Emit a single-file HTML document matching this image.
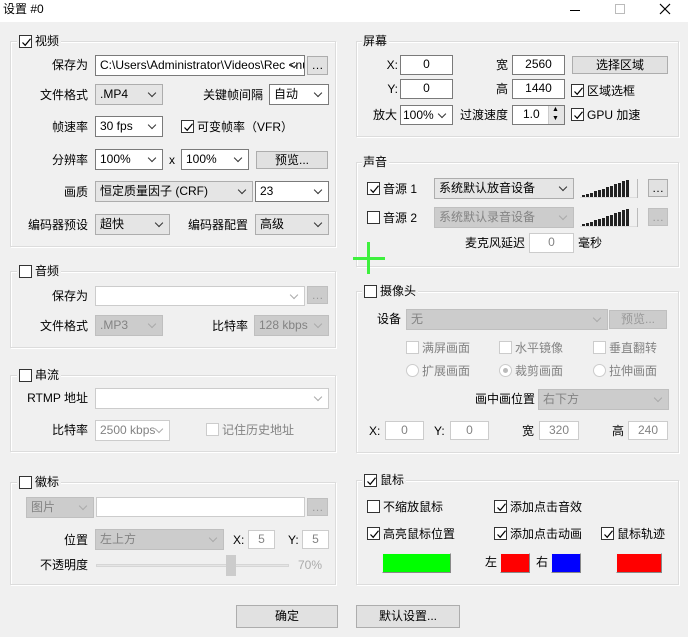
<!DOCTYPE html>
<html><head><meta charset="utf-8"><style>
*{margin:0;padding:0;box-sizing:border-box}
body{width:688px;height:637px;background:#f0f0f0;position:relative;overflow:hidden;font:12px "Liberation Sans","Noto Sans CJK SC",sans-serif;color:#000}
div,span{position:absolute}
.t{white-space:nowrap;line-height:14px}
.r{text-align:right}
.g{border:1px solid #dcdcdc;box-shadow:inset 1px 1px 0 #fff,1px 1px 0 #fff}
.gt{background:#f0f0f0;padding:0 2px 0 1px;line-height:14px;white-space:nowrap}
.cw{background:#fff;border:1px solid #7a7a7a;line-height:18px;padding-left:4px;white-space:nowrap;overflow:hidden}
.cg{background:#e5e5e5;border:1px solid #adadad;line-height:18px;padding-left:4px;white-space:nowrap;overflow:hidden}
.dg{background:#cccccc;border:1px solid #bfbfbf;color:#838383;line-height:18px;padding-left:4px;white-space:nowrap;overflow:hidden}
.dw{background:#fff;border:1px solid #cccccc;color:#838383;line-height:17px;text-align:center}
.ar:after{content:"";position:absolute;right:7px;top:5px;width:5px;height:5px;border-right:1px solid #333;border-bottom:1px solid #333;transform:rotate(45deg)}
.ard:after{content:"";position:absolute;right:7px;top:5px;width:5px;height:5px;border-right:1px solid #aaa;border-bottom:1px solid #aaa;transform:rotate(45deg)}
.b{background:#e1e1e1;border:1px solid #adadad;text-align:center;line-height:17px}
.bd{background:#cccccc;border:1px solid #bfbfbf;color:#999;text-align:center;line-height:16px}
.in{background:#fff;border:1px solid #7a7a7a;text-align:center;line-height:17px}
.ck{width:13px;height:13px;border:1px solid #333;background:#fff}
.ckd{width:13px;height:13px;border:1px solid #ccc;background:#fff}
.ck svg{position:absolute;left:1px;top:1px}
.rd{width:13px;height:13px;border:1px solid #ccc;border-radius:50%;background:#fff}
.dis{color:#838383}
</style></head><body>
<div style="left:0;top:0;width:688px;height:22px;background:#fff"></div>
<div class="t" style="left:3px;top:2px;font-size:12px">设置 #0</div>
<div style="left:570px;top:10px;width:10px;height:1px;background:#000"></div>
<div style="left:615px;top:4px;width:10px;height:10px;border:1px solid #bbb"></div>
<svg style="position:absolute;left:659px;top:3px" width="12" height="12"><path d="M1 1L11 11M11 1L1 11" stroke="#000" stroke-width="1.2"/></svg>

<div class="g" style="left:10px;top:41px;width:326px;height:206px"></div>
<div class="g" style="left:10px;top:271px;width:326px;height:77px"></div>
<div class="g" style="left:10px;top:375px;width:326px;height:77px"></div>
<div class="g" style="left:10px;top:482px;width:326px;height:103px"></div>
<div class="g" style="left:356px;top:41px;width:323px;height:96px"></div>
<div class="g" style="left:356px;top:162px;width:323px;height:105px"></div>
<div class="g" style="left:356px;top:291px;width:323px;height:162px"></div>
<div class="g" style="left:356px;top:480px;width:323px;height:105px"></div>

<div class="gt" style="left:17px;top:34px;padding-left:18px">视频</div>
<div class="ck" style="left:19px;top:35px"><svg width="11" height="11"><path d="M1.5 5.5L4.2 8.3L9.5 1.8" fill="none" stroke="#000" stroke-width="1.2"/></svg></div>
<div class="gt" style="left:17px;top:264px;padding-left:18px">音频</div><div class="ck" style="left:19px;top:265px"></div>
<div class="gt" style="left:17px;top:368px;padding-left:18px">串流</div><div class="ck" style="left:19px;top:369px"></div>
<div class="gt" style="left:17px;top:475px;padding-left:18px">徽标</div><div class="ck" style="left:19px;top:476px"></div>
<div class="gt" style="left:362px;top:34px">屏幕</div>
<div class="gt" style="left:362px;top:155px">声音</div>
<div class="gt" style="left:362px;top:284px;padding-left:18px">摄像头</div><div class="ck" style="left:364px;top:285px"></div>
<div class="gt" style="left:362px;top:473px;padding-left:18px">鼠标</div>
<div class="ck" style="left:364px;top:474px"><svg width="11" height="11"><path d="M1.5 5.5L4.2 8.3L9.5 1.8" fill="none" stroke="#000" stroke-width="1.2"/></svg></div>

<div class="t r" style="left:20px;top:58px;width:68px">保存为</div>
<div class="cw ar" style="left:95px;top:55px;width:210px;height:21px">C:\Users\Administrator\Videos\Rec &lt;nu</div>
<div class="b" style="left:307px;top:56px;width:21px;height:19px">…</div>
<div class="t r" style="left:20px;top:88px;width:68px">文件格式</div>
<div class="cg ar" style="left:95px;top:84px;width:68px;height:21px">.MP4</div>
<div class="t r" style="left:180px;top:88px;width:83px">关键帧间隔</div>
<div class="cw ar" style="left:269px;top:84px;width:60px;height:21px">自动</div>
<div class="t r" style="left:20px;top:120px;width:68px">帧速率</div>
<div class="cw ar" style="left:95px;top:116px;width:68px;height:21px">30 fps</div>
<div class="ck" style="left:181px;top:120px"><svg width="11" height="11"><path d="M1.5 5.5L4.2 8.3L9.5 1.8" fill="none" stroke="#000" stroke-width="1.2"/></svg></div>
<div class="t" style="left:197px;top:120px">可变帧率（VFR）</div>
<div class="t r" style="left:20px;top:153px;width:68px">分辨率</div>
<div class="cw ar" style="left:95px;top:149px;width:68px;height:21px">100%</div>
<div class="t" style="left:169px;top:153px">x</div>
<div class="cw ar" style="left:181px;top:149px;width:68px;height:21px">100%</div>
<div class="b" style="left:256px;top:151px;width:72px;height:18px">预览...</div>
<div class="t r" style="left:20px;top:185px;width:68px">画质</div>
<div class="cg ar" style="left:95px;top:181px;width:158px;height:21px">恒定质量因子 (CRF)</div>
<div class="cw ar" style="left:255px;top:181px;width:74px;height:21px">23</div>
<div class="t r" style="left:10px;top:218px;width:78px">编码器预设</div>
<div class="cg ar" style="left:95px;top:214px;width:75px;height:21px">超快</div>
<div class="t r" style="left:170px;top:218px;width:78px">编码器配置</div>
<div class="cg ar" style="left:255px;top:214px;width:74px;height:21px">高级</div>

<div class="t r" style="left:20px;top:289px;width:68px">保存为</div>
<div class="dw ard" style="left:95px;top:286px;width:210px;height:20px;background:#fff"></div>
<div class="bd" style="left:307px;top:286px;width:21px;height:18px">…</div>
<div class="t r" style="left:20px;top:319px;width:68px">文件格式</div>
<div class="dg ard" style="left:95px;top:315px;width:68px;height:21px">.MP3</div>
<div class="t r" style="left:180px;top:319px;width:68px">比特率</div>
<div class="dg ard" style="left:254px;top:315px;width:75px;height:21px">128 kbps</div>

<div class="t r" style="left:10px;top:391px;width:78px">RTMP 地址</div>
<div class="dw ard" style="left:95px;top:388px;width:234px;height:21px"></div>
<div class="t r" style="left:20px;top:423px;width:68px">比特率</div>
<div class="dw ard" style="left:95px;top:420px;width:75px;height:21px;text-align:left;padding-left:4px;line-height:18px">2500 kbps</div>
<div class="ckd" style="left:206px;top:423px"></div>
<div class="t dis" style="left:222px;top:423px">记住历史地址</div>

<div class="dg ard" style="left:26px;top:497px;width:68px;height:21px">图片</div>
<div class="dw" style="left:96px;top:497px;width:209px;height:20px"></div>
<div class="bd" style="left:307px;top:498px;width:21px;height:18px">…</div>
<div class="t r" style="left:20px;top:533px;width:68px">位置</div>
<div class="dg ard" style="left:95px;top:529px;width:129px;height:21px">左上方</div>
<div class="t" style="left:233px;top:533px">X:</div>
<div class="dw" style="left:248px;top:530px;width:27px;height:19px">5</div>
<div class="t" style="left:288px;top:533px">Y:</div>
<div class="dw" style="left:302px;top:530px;width:27px;height:19px">5</div>
<div class="t r" style="left:10px;top:558px;width:78px">不透明度</div>
<div style="left:96px;top:564px;width:193px;height:3px;background:#e5e5e5;border:1px solid #d6d6d6"></div>
<div style="left:226px;top:555px;width:10px;height:21px;background:#ccc"></div>
<div class="t dis" style="left:298px;top:558px;color:#aaa">70%</div>

<div class="t r" style="left:370px;top:58px;width:28px">X:</div>
<div class="in" style="left:400px;top:55px;width:53px;height:20px">0</div>
<div class="t r" style="left:470px;top:58px;width:38px">宽</div>
<div class="in" style="left:512px;top:55px;width:53px;height:20px">2560</div>
<div class="b" style="left:572px;top:56px;width:96px;height:18px">选择区域</div>
<div class="t r" style="left:370px;top:82px;width:28px">Y:</div>
<div class="in" style="left:400px;top:79px;width:53px;height:20px">0</div>
<div class="t r" style="left:470px;top:82px;width:38px">高</div>
<div class="in" style="left:512px;top:79px;width:53px;height:20px">1440</div>
<div class="ck" style="left:571px;top:84px"><svg width="11" height="11"><path d="M1.5 5.5L4.2 8.3L9.5 1.8" fill="none" stroke="#000" stroke-width="1.2"/></svg></div>
<div class="t" style="left:587px;top:84px">区域选框</div>
<div class="t r" style="left:360px;top:108px;width:37px">放大</div>
<div class="cw ar" style="left:400px;top:105px;width:53px;height:20px;padding-left:2px">100%</div>
<div class="t r" style="left:455px;top:108px;width:53px">过渡速度</div>
<div class="in" style="left:512px;top:105px;width:53px;height:20px;text-align:left;padding-left:10px">1.0</div>
<div style="left:548px;top:106px;width:16px;height:18px;background:#e5e5e5;border-left:1px solid #ccc"></div>
<div class="t" style="left:552px;top:105px;font-size:7px;line-height:9px">▲<br>▼</div>
<div class="ck" style="left:571px;top:108px"><svg width="11" height="11"><path d="M1.5 5.5L4.2 8.3L9.5 1.8" fill="none" stroke="#000" stroke-width="1.2"/></svg></div>
<div class="t" style="left:587px;top:108px">GPU 加速</div>

<div class="ck" style="left:367px;top:182px"><svg width="11" height="11"><path d="M1.5 5.5L4.2 8.3L9.5 1.8" fill="none" stroke="#000" stroke-width="1.2"/></svg></div>
<div class="t" style="left:383px;top:182px">音源 1</div>
<div class="cg ar" style="left:434px;top:178px;width:140px;height:21px">系统默认放音设备</div>
<div class="ck" style="left:367px;top:211px"></div>
<div class="t" style="left:383px;top:211px">音源 2</div>
<div class="dg ard" style="left:434px;top:207px;width:140px;height:21px">系统默认录音设备</div>
<svg style="position:absolute;left:580px;top:178px" width="60" height="50">
<g fill="#222">
<rect x="2" y="17" width="3" height="2"/><rect x="6" y="16" width="3" height="3"/><rect x="10" y="15" width="3" height="4"/><rect x="14" y="13" width="3" height="6"/><rect x="18" y="12" width="3" height="7"/><rect x="22" y="11" width="3" height="8"/><rect x="26" y="9" width="3" height="10"/><rect x="30" y="8" width="3" height="11"/><rect x="34" y="6" width="3" height="13"/><rect x="38" y="5" width="3" height="14"/><rect x="42" y="3" width="3" height="16"/><rect x="46" y="2" width="3" height="17"/>
<rect x="2" y="46" width="3" height="2"/><rect x="6" y="45" width="3" height="3"/><rect x="10" y="44" width="3" height="4"/><rect x="14" y="42" width="3" height="6"/><rect x="18" y="41" width="3" height="7"/><rect x="22" y="40" width="3" height="8"/><rect x="26" y="38" width="3" height="10"/><rect x="30" y="37" width="3" height="11"/><rect x="34" y="35" width="3" height="13"/><rect x="38" y="34" width="3" height="14"/><rect x="42" y="32" width="3" height="16"/><rect x="46" y="31" width="3" height="17"/>
</g>
<rect x="0" y="19" width="57" height="1" fill="#ddd"/><rect x="57" y="1" width="1" height="19" fill="#bbb"/>
<rect x="0" y="48" width="57" height="1" fill="#ddd"/><rect x="57" y="30" width="1" height="19" fill="#bbb"/>
</svg>
<div class="b" style="left:648px;top:179px;width:20px;height:18px">…</div>
<div class="bd" style="left:648px;top:208px;width:20px;height:18px">…</div>
<div class="t r" style="left:455px;top:236px;width:70px">麦克风延迟</div>
<div class="dw" style="left:529px;top:233px;width:45px;height:20px">0</div>
<div class="t" style="left:578px;top:236px">毫秒</div>
<div style="left:353px;top:257px;width:32px;height:3px;background:#3ef03e"></div>
<div style="left:367px;top:242px;width:3px;height:32px;background:#3ef03e"></div>

<div class="t r" style="left:370px;top:312px;width:31px">设备</div>
<div class="dg ard" style="left:406px;top:309px;width:202px;height:21px">无</div>
<div class="bd" style="left:609px;top:310px;width:58px;height:19px">预览...</div>
<div class="ckd" style="left:406px;top:341px"></div><div class="t dis" style="left:422px;top:341px">满屏画面</div>
<div class="ckd" style="left:499px;top:341px"></div><div class="t dis" style="left:515px;top:341px">水平镜像</div>
<div class="ckd" style="left:593px;top:341px"></div><div class="t dis" style="left:609px;top:341px">垂直翻转</div>
<div class="rd" style="left:406px;top:364px"></div><div class="t dis" style="left:422px;top:364px">扩展画面</div>
<div class="rd" style="left:499px;top:364px"><div style="left:3px;top:3px;width:5px;height:5px;border-radius:50%;background:#bbb"></div></div><div class="t dis" style="left:515px;top:364px">裁剪画面</div>
<div class="rd" style="left:593px;top:364px"></div><div class="t dis" style="left:609px;top:364px">拉伸画面</div>
<div class="t r" style="left:460px;top:392px;width:75px">画中画位置</div>
<div class="dg ard" style="left:538px;top:389px;width:131px;height:21px">右下方</div>
<div class="t" style="left:369px;top:424px">X:</div>
<div class="dw" style="left:385px;top:421px;width:39px;height:19px">0</div>
<div class="t" style="left:434px;top:424px">Y:</div>
<div class="dw" style="left:450px;top:421px;width:39px;height:19px">0</div>
<div class="t" style="left:522px;top:424px">宽</div>
<div class="dw" style="left:539px;top:421px;width:40px;height:19px">320</div>
<div class="t" style="left:612px;top:424px">高</div>
<div class="dw" style="left:628px;top:421px;width:40px;height:19px">240</div>

<div class="ck" style="left:367px;top:500px"></div><div class="t" style="left:383px;top:500px">不缩放鼠标</div>
<div class="ck" style="left:494px;top:500px"><svg width="11" height="11"><path d="M1.5 5.5L4.2 8.3L9.5 1.8" fill="none" stroke="#000" stroke-width="1.2"/></svg></div><div class="t" style="left:510px;top:500px">添加点击音效</div>
<div class="ck" style="left:367px;top:527px"><svg width="11" height="11"><path d="M1.5 5.5L4.2 8.3L9.5 1.8" fill="none" stroke="#000" stroke-width="1.2"/></svg></div><div class="t" style="left:383px;top:527px">高亮鼠标位置</div>
<div class="ck" style="left:494px;top:527px"><svg width="11" height="11"><path d="M1.5 5.5L4.2 8.3L9.5 1.8" fill="none" stroke="#000" stroke-width="1.2"/></svg></div><div class="t" style="left:510px;top:527px">添加点击动画</div>
<div class="ck" style="left:601px;top:527px"><svg width="11" height="11"><path d="M1.5 5.5L4.2 8.3L9.5 1.8" fill="none" stroke="#000" stroke-width="1.2"/></svg></div><div class="t" style="left:617px;top:527px">鼠标轨迹</div>
<div style="left:382px;top:553px;width:69px;height:20px;background:#00ff00;border:1px solid #888;border-top-color:#eee;border-left-color:#eee"></div>
<div class="t" style="left:485px;top:555px">左</div>
<div style="left:500px;top:553px;width:30px;height:20px;background:#ff0000;border:1px solid #888;border-top-color:#eee;border-left-color:#eee"></div>
<div class="t" style="left:536px;top:555px">右</div>
<div style="left:551px;top:553px;width:30px;height:20px;background:#0000ff;border:1px solid #888;border-top-color:#eee;border-left-color:#eee"></div>
<div style="left:616px;top:553px;width:46px;height:20px;background:#ff0000;border:1px solid #888;border-top-color:#eee;border-left-color:#eee"></div>

<div class="b" style="left:236px;top:605px;width:102px;height:23px;line-height:21px">确定</div>
<div class="b" style="left:356px;top:605px;width:104px;height:23px;line-height:21px">默认设置...</div>
</body></html>
